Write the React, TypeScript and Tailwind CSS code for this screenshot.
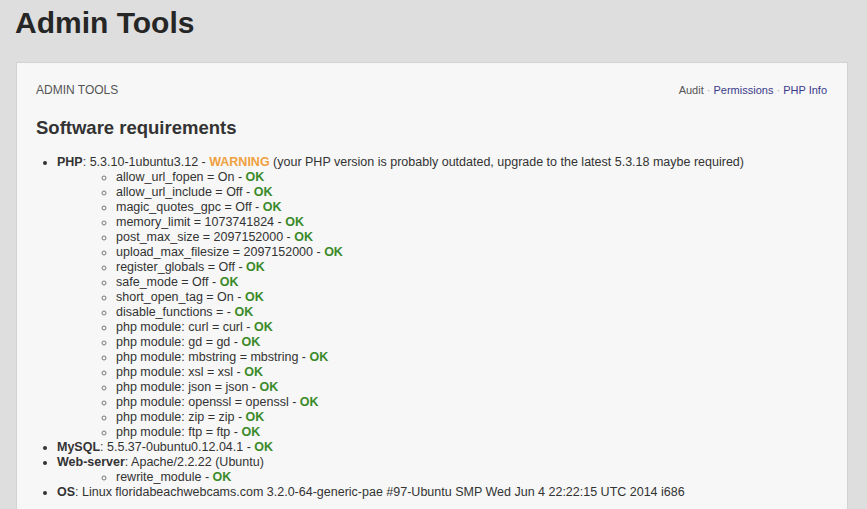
import React from "react";

const OK = () => <b className="text-[#3a8a2a]">OK</b>;

const phpItems: string[] = [
  "allow_url_fopen = On",
  "allow_url_include = Off",
  "magic_quotes_gpc = Off",
  "memory_limit = 1073741824",
  "post_max_size = 2097152000",
  "upload_max_filesize = 2097152000",
  "register_globals = Off",
  "safe_mode = Off",
  "short_open_tag = On",
  "disable_functions = ",
  "php module: curl = curl",
  "php module: gd = gd",
  "php module: mbstring = mbstring",
  "php module: xsl = xsl",
  "php module: json = json",
  "php module: openssl = openssl",
  "php module: zip = zip",
  "php module: ftp = ftp",
];

export default function App() {
  return (
    <div
      className="min-h-[509px] w-[867px] overflow-hidden bg-[#dedede] text-[#333]"
      style={{ fontFamily: '"Liberation Sans", Arial, sans-serif' }}
    >
      <h1 className="pl-[15px] pt-[3px] text-[30px] font-bold leading-[40px] text-[#262626]">
        Admin Tools
      </h1>
      <div className="ml-[16px] mt-[19px] w-[832px] h-[460px] border border-[#d3d3d3] bg-[#f7f7f7] px-[19px] pt-[20px]">
        <div className="flex items-center justify-between text-[12px] leading-[15px]">
          <span className="text-[#555]">ADMIN TOOLS</span>
          <span className="text-[11px] mr-[1px]">
            <span className="text-[#555]">Audit</span>
            <span className="text-[#aaa]"> · </span>
            <span className="text-[#3a3a8a]">Permissions</span>
            <span className="text-[#aaa]"> · </span>
            <span className="text-[#3a3a8a]">PHP Info</span>
          </span>
        </div>
        <h2 className="mt-[19px] text-[18.5px] font-bold leading-[22px] text-[#333]">
          Software requirements
        </h2>
        <ul className="mt-[16px] list-disc pl-[21px] text-[12.5px] leading-[15px] text-[#333]">
          <li>
            <b>PHP</b>: 5.3.10-1ubuntu3.12 - <b className="text-[#f0a040]">WARNING</b> (your PHP version is probably outdated, upgrade to the latest 5.3.18 maybe required)
            <ul className="list-[circle] pl-[59px] marker:text-[#777]">
              {phpItems.map((t) => (
                <li key={t}>
                  {t} - <OK />
                </li>
              ))}
            </ul>
          </li>
          <li>
            <b>MySQL</b>: 5.5.37-0ubuntu0.12.04.1 - <OK />
          </li>
          <li>
            <b>Web-server</b>: Apache/2.2.22 (Ubuntu)
            <ul className="list-[circle] pl-[59px] marker:text-[#777]">
              <li>
                rewrite_module - <OK />
              </li>
            </ul>
          </li>
          <li>
            <b>OS</b>: Linux floridabeachwebcams.com 3.2.0-64-generic-pae #97-Ubuntu SMP Wed Jun 4 22:22:15 UTC 2014 i686
          </li>
        </ul>
      </div>
    </div>
  );
}
